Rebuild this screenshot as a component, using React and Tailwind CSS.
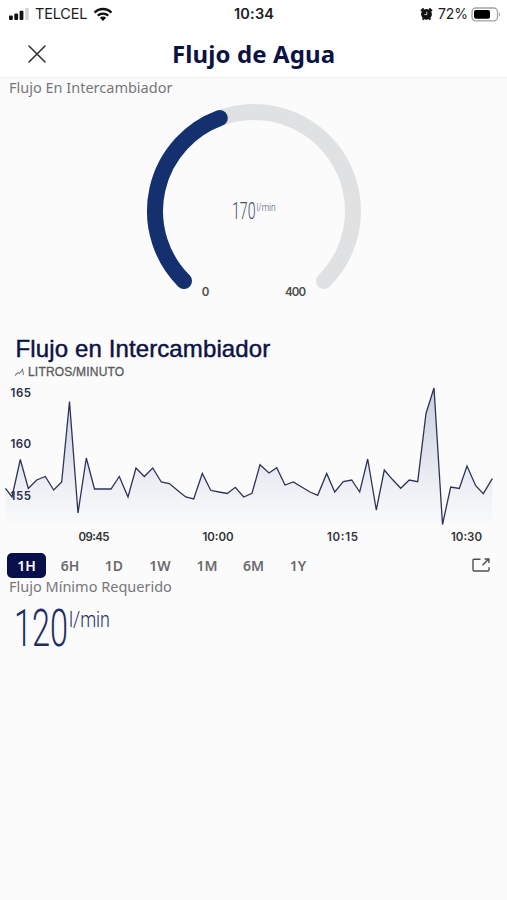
import { useState } from 'react';
import { clsx } from 'clsx';

const RANGES = [
  { id: '1H', width: 'w-[39px]' },
  { id: '6H', width: 'w-[48px]' },
  { id: '1D', width: 'w-[40px]' },
  { id: '1W', width: 'w-[52px]' },
  { id: '1M', width: 'w-[42px]' },
  { id: '6M', width: 'w-[51px]' },
  { id: '1Y', width: 'w-[38px]' },
];

// [x, y] in chart pixels, one sample per minute
const SAMPLES = [
  [5.5, 108.3], [12, 117], [20.3, 79.5], [28.3, 108.5], [36.7, 100], [45.3, 96.5],
  [53.7, 110], [61.7, 102], [69.5, 21.5], [78, 133], [86.3, 78], [94.5, 109],
  [102.7, 109], [111, 109], [119.3, 96.5], [128, 117], [136, 88], [144.3, 96.5],
  [152.7, 88], [161.3, 102], [169.3, 103.5], [177.7, 110.5], [185.7, 117], [193.7, 119],
  [202.3, 93.5], [210.7, 110.3], [219, 112], [227.3, 113.5], [235.3, 107.3], [243.7, 117],
  [252, 113.3], [260, 84.7], [269, 93], [276.7, 87.7], [285, 105], [293.3, 102],
  [301.7, 107], [310, 112], [317.7, 115.3], [326.7, 93.5], [334.7, 112], [343.3, 101.7],
  [351.7, 100], [359.7, 112], [367.7, 79], [376.3, 130], [384.3, 90], [392.3, 99.3],
  [400.7, 108.3], [409.3, 100], [417.7, 101.7], [426, 33.5], [434, 8], [442.5, 144.5],
  [450.7, 107], [459.3, 108.5], [467, 86], [475.7, 105.7], [483.3, 113.7], [492.3, 98.7],
];

const StatusBar = () => (
  <div className="flex h-[28px] items-center bg-white pl-[9px] pr-[6px] text-[#1c1c1e]">
    <svg width="21" height="14" viewBox="0 0 21 14">
      <rect x="0" y="8.5" width="3.8" height="4.5" rx="1" fill="#111" />
      <rect x="5.3" y="6.5" width="3.8" height="6.5" rx="1" fill="#111" />
      <rect x="10.6" y="3.7" width="3.8" height="9.3" rx="1" fill="#111" />
      <rect x="16" y="1" width="3.8" height="12" rx="1" fill="#d6d6d8" />
    </svg>
    <span className="ml-[5px] w-[53px] whitespace-nowrap font-['Inter',sans-serif] text-[14.5px] leading-none tracking-[-0.2px]">
      TELCEL
    </span>
    <svg className="ml-[5px]" width="20" height="15" viewBox="0 0 20 15" fill="none" stroke="#111">
      <path d="M1.6 5.6C6.2 .9 13.8 .9 18.4 5.6" strokeWidth="2.5" />
      <path d="M4.7 8.7C7.7 5.8 12.3 5.8 15.3 8.7" strokeWidth="2.3" />
      <path d="M10 14L6.8 10.8C8.6 9.2 11.4 9.2 13.2 10.8Z" fill="#111" stroke="none" />
    </svg>
    <span className="ml-[121px] w-[41px] whitespace-nowrap font-['Inter',sans-serif] text-[14.5px] font-semibold leading-none tracking-[0.2px]">
      10:34
    </span>
    <div className="ml-auto flex items-center">
      <svg width="13" height="14" viewBox="0 0 13 14">
        <circle cx="6.5" cy="7.3" r="5.4" fill="#111" />
        <path d="M1 4L3.8 1.6M12 4L9.2 1.6M2.5 12.6L3.7 11.4M10.5 12.6L9.3 11.4" stroke="#111" strokeWidth="2" />
        <path d="M6.8 4.6V7.6H4.4" fill="none" stroke="#ccc" strokeWidth="1" />
      </svg>
      <span className="ml-[5px] w-[30px] whitespace-nowrap font-['Inter',sans-serif] text-[14px] leading-none tracking-[-0.1px]">
        72%
      </span>
      <svg className="ml-[3px]" width="30" height="15" viewBox="0 0 30 15">
        <rect x="1" y="1" width="25.5" height="12.8" rx="3.8" fill="none" stroke="#a2a2a5" strokeWidth="1.3" />
        <rect x="3" y="3" width="16" height="8.8" rx="2" fill="#000" />
        <path d="M28 5.2C29.6 6 29.6 8.8 28 9.6Z" fill="#a2a2a5" />
      </svg>
    </div>
  </div>
);

const Header = () => (
  <header className="flex h-[50px] items-center border-b border-[#f0f0f1] bg-white">
    <button type="button" aria-label="Cerrar" className="ml-[28px] mt-[3px]">
      <svg width="18" height="18" viewBox="0 0 18 18" stroke="#2b2b30" strokeWidth="1.5" strokeLinecap="round">
        <path d="M1 1L17 17M17 1L1 17" />
      </svg>
    </button>
    <h1 className="ml-[126px] mt-[2px] whitespace-nowrap font-['Noto_Sans',sans-serif] text-[24px] font-bold leading-none tracking-[0.1px] text-[#0b1244]">
      Flujo de Agua
    </h1>
  </header>
);

const Label = ({ children }) => (
  <p className="h-[20px] whitespace-nowrap pl-[9px] font-['Noto_Sans',sans-serif] text-[14.5px] leading-[18px] text-[#77777a]">
    {children}
  </p>
);

const Gauge = ({ value, max }) => {
  // 270 degree dial that opens at the bottom
  const angle = ((135 + (value / max) * 270) * Math.PI) / 180;
  const x = 108 + 99 * Math.cos(angle);
  const y = 108 + 99 * Math.sin(angle);

  return (
    <svg className="ml-[146px] mt-[5px] block" width="216" height="200" viewBox="0 0 216 200">
      <g fill="none" strokeWidth="16" strokeLinecap="round">
        <path d="M38 178A99 99 0 1 1 178 178" stroke="#dfe1e2" />
        <path d={`M38 178A99 99 0 0 1 ${x} ${y}`} stroke="#14306f" />
      </g>
      <g fontFamily="Roboto, sans-serif" fontWeight="300" fill="#454c70">
        <text x="86" y="116" fontSize="23" textLength="23.5" lengthAdjust="spacingAndGlyphs">{value}</text>
        <text x="110.5" y="108" fontSize="10" textLength="19" lengthAdjust="spacingAndGlyphs">l/min</text>
      </g>
      <g fontFamily="Inter, sans-serif" fontSize="11.5" fontWeight="600" fill="#4a4a4c" textAnchor="middle">
        <text x="59.5" y="192.7">0</text>
        <text x="149.5" y="192.7" textLength="21">{max}</text>
      </g>
    </svg>
  );
};

const FlowChart = () => {
  const line = SAMPLES.map(([x, y]) => `${x},${y}`).join(' ');

  return (
    <svg className="block" width="507" height="168" viewBox="0 0 507 168">
      <defs>
        <linearGradient id="area" x1="0" y1="8" x2="0" y2="142" gradientUnits="userSpaceOnUse">
          <stop offset="0" stopColor="#b9c0d6" stopOpacity="0.75" />
          <stop offset="0.55" stopColor="#d6dbe8" stopOpacity="0.65" />
          <stop offset="1" stopColor="#f3f5f9" stopOpacity="0.4" />
        </linearGradient>
      </defs>
      <polygon points={`5.5,142 ${line} 492.3,142`} fill="url(#area)" />
      <polyline points={line} fill="none" stroke="#2c3358" strokeWidth="1.3" />
      <g fontFamily="Inter, sans-serif" fontSize="11.5" fontWeight="600" fill="#272c48">
        <text x="10.5" y="17" textLength="20.5">165</text>
        <text x="10.5" y="68" textLength="20.5">160</text>
        <text x="10.5" y="119.5" textLength="20.5">155</text>
      </g>
      <g fontFamily="Inter, sans-serif" fontSize="11.5" fontWeight="600" fill="#333336">
        <text x="78.5" y="160.5" textLength="31">09:45</text>
        <text x="202.5" y="160.5" textLength="31">10:00</text>
        <text x="327" y="160.5" textLength="31">10:15</text>
        <text x="451" y="160.5" textLength="31">10:30</text>
      </g>
    </svg>
  );
};

export default function App() {
  const [range, setRange] = useState('1H');

  return (
    <div className="flex h-[900px] w-[507px] flex-col overflow-hidden bg-[#fbfbfb]">
      <StatusBar />
      <Header />

      <section>
        <Label>Flujo En Intercambiador</Label>
        <Gauge value={170} max={400} />
      </section>

      <section className="pt-[33px]">
        <h2 className="h-[28px] whitespace-nowrap pl-[15.5px] font-['Liberation_Sans',Arial,sans-serif] text-[24px] leading-[26px] tracking-[0.12px] text-[#0b1244] [-webkit-text-stroke:0.45px_#0b1244]">
          Flujo en Intercambiador
        </h2>
        <div className="flex h-[16px] items-center pl-[14px]">
          <svg width="11" height="9" viewBox="0 0 11 9" fill="none" stroke="#86868a" strokeWidth="1.2">
            <path d="M1 7.5L4 4.5L5.5 5.5L8.5 1.5L9.5 7" />
          </svg>
          <span className="ml-[3px] whitespace-nowrap font-['Liberation_Sans',Arial,sans-serif] text-[12px] leading-none tracking-[0.2px] text-[#59595c] [-webkit-text-stroke:0.3px_#59595c]">
            LITROS/MINUTO
          </span>
        </div>
        <FlowChart />

        <div className="flex h-[29px] items-center pl-[7px] pr-[17px] pt-[5px]">
          {RANGES.map(({ id, width }) => (
            <button
              key={id}
              type="button"
              onClick={() => setRange(id)}
              className={clsx(
                "h-[25px] rounded-[5px] text-center font-['Noto_Sans',sans-serif] text-[14px] font-semibold leading-[25px]",
                width,
                range === id ? 'bg-[#07104a] text-white' : 'text-[#6b6b6e]'
              )}
            >
              {id}
            </button>
          ))}
          <svg className="ml-auto" width="18" height="14" viewBox="0 0 18 14" fill="none" stroke="#4e4e52" strokeWidth="1.4">
            <path d="M8.5 1.2H2Q1 1.2 1 2.2V12Q1 13 2 13H16Q17 13 17 12V9.3" />
            <path d="M10.5 7.3L16.5 1.2M12.6 1H16.9V5" />
          </svg>
        </div>
      </section>

      <section>
        <Label>Flujo Mínimo Requerido</Label>
        <svg className="ml-[14px] block" width="100" height="64" viewBox="0 0 100 64">
          <g fontFamily="Roboto, sans-serif" fill="#1d2d66">
            <text x="0" y="48.5" fontSize="52" fontWeight="300" textLength="54" lengthAdjust="spacingAndGlyphs">120</text>
            <text x="55" y="30" fontSize="22" fontWeight="300" textLength="41" lengthAdjust="spacingAndGlyphs">l/min</text>
          </g>
        </svg>
      </section>
    </div>
  );
}
